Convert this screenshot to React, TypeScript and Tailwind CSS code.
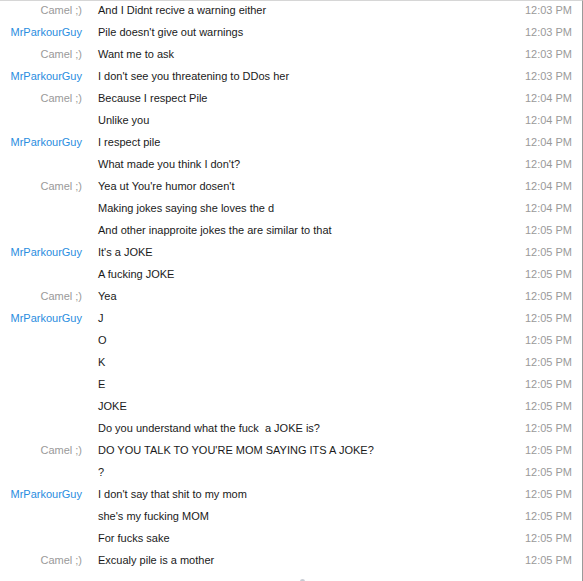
const messages = [
  { from: 'Camel ;)', text: 'And I Didnt recive a warning either', time: '12:03 PM' },
  { from: 'MrParkourGuy', text: "Pile doesn't give out warnings", time: '12:03 PM' },
  { from: 'Camel ;)', text: 'Want me to ask', time: '12:03 PM' },
  { from: 'MrParkourGuy', text: "I don't see you threatening to DDos her", time: '12:03 PM' },
  { from: 'Camel ;)', text: 'Because I respect Pile', time: '12:04 PM' },
  { from: '', text: 'Unlike you', time: '12:04 PM' },
  { from: 'MrParkourGuy', text: 'I respect pile', time: '12:04 PM' },
  { from: '', text: "What made you think I don't?", time: '12:04 PM' },
  { from: 'Camel ;)', text: "Yea ut You're humor dosen't", time: '12:04 PM' },
  { from: '', text: 'Making jokes saying she loves the d', time: '12:04 PM' },
  { from: '', text: 'And other inapproite jokes the are similar to that', time: '12:05 PM' },
  { from: 'MrParkourGuy', text: "It's a JOKE", time: '12:05 PM' },
  { from: '', text: 'A fucking JOKE', time: '12:05 PM' },
  { from: 'Camel ;)', text: 'Yea', time: '12:05 PM' },
  { from: 'MrParkourGuy', text: 'J', time: '12:05 PM' },
  { from: '', text: 'O', time: '12:05 PM' },
  { from: '', text: 'K', time: '12:05 PM' },
  { from: '', text: 'E', time: '12:05 PM' },
  { from: '', text: 'JOKE', time: '12:05 PM' },
  { from: '', text: 'Do you understand what the fuck  a JOKE is?', time: '12:05 PM' },
  { from: 'Camel ;)', text: "DO YOU TALK TO YOU'RE MOM SAYING ITS A JOKE?", time: '12:05 PM' },
  { from: '', text: '?', time: '12:05 PM' },
  { from: 'MrParkourGuy', text: "I don't say that shit to my mom", time: '12:05 PM' },
  { from: '', text: "she's my fucking MOM", time: '12:05 PM' },
  { from: '', text: 'For fucks sake', time: '12:05 PM' },
  { from: 'Camel ;)', text: 'Excualy pile is a mother', time: '12:05 PM' },
]

export default function App() {
  return (
    <div
      className="relative w-[583px] h-[581px] overflow-hidden bg-white border-t border-r border-t-[#d6d6d6] border-r-[#9a9a9a] text-[11px]"
      style={{ fontFamily: '"Liberation Sans", Arial, sans-serif' }}
    >
      {messages.map((m, i) => (
        <div key={i} className="flex h-[22px] leading-[18px]">
          <div
            className={
              m.from === 'MrParkourGuy'
                ? 'w-[82px] shrink-0 text-right text-[#2a8de0]'
                : 'w-[82px] shrink-0 text-right text-[#9a9a9a]'
            }
          >
            {m.from}
          </div>
          <div className="flex-1 pl-[16px] text-[#1a1a1a] whitespace-pre">{m.text}</div>
          <div className="w-[80px] shrink-0 pr-[10px] text-right text-[#9a9a9a]">{m.time}</div>
        </div>
      ))}
      <div className="absolute left-[300px] top-[578px] w-[5px] h-[3px] rounded-t-sm bg-[#c8ccd4]" />
    </div>
  )
}
